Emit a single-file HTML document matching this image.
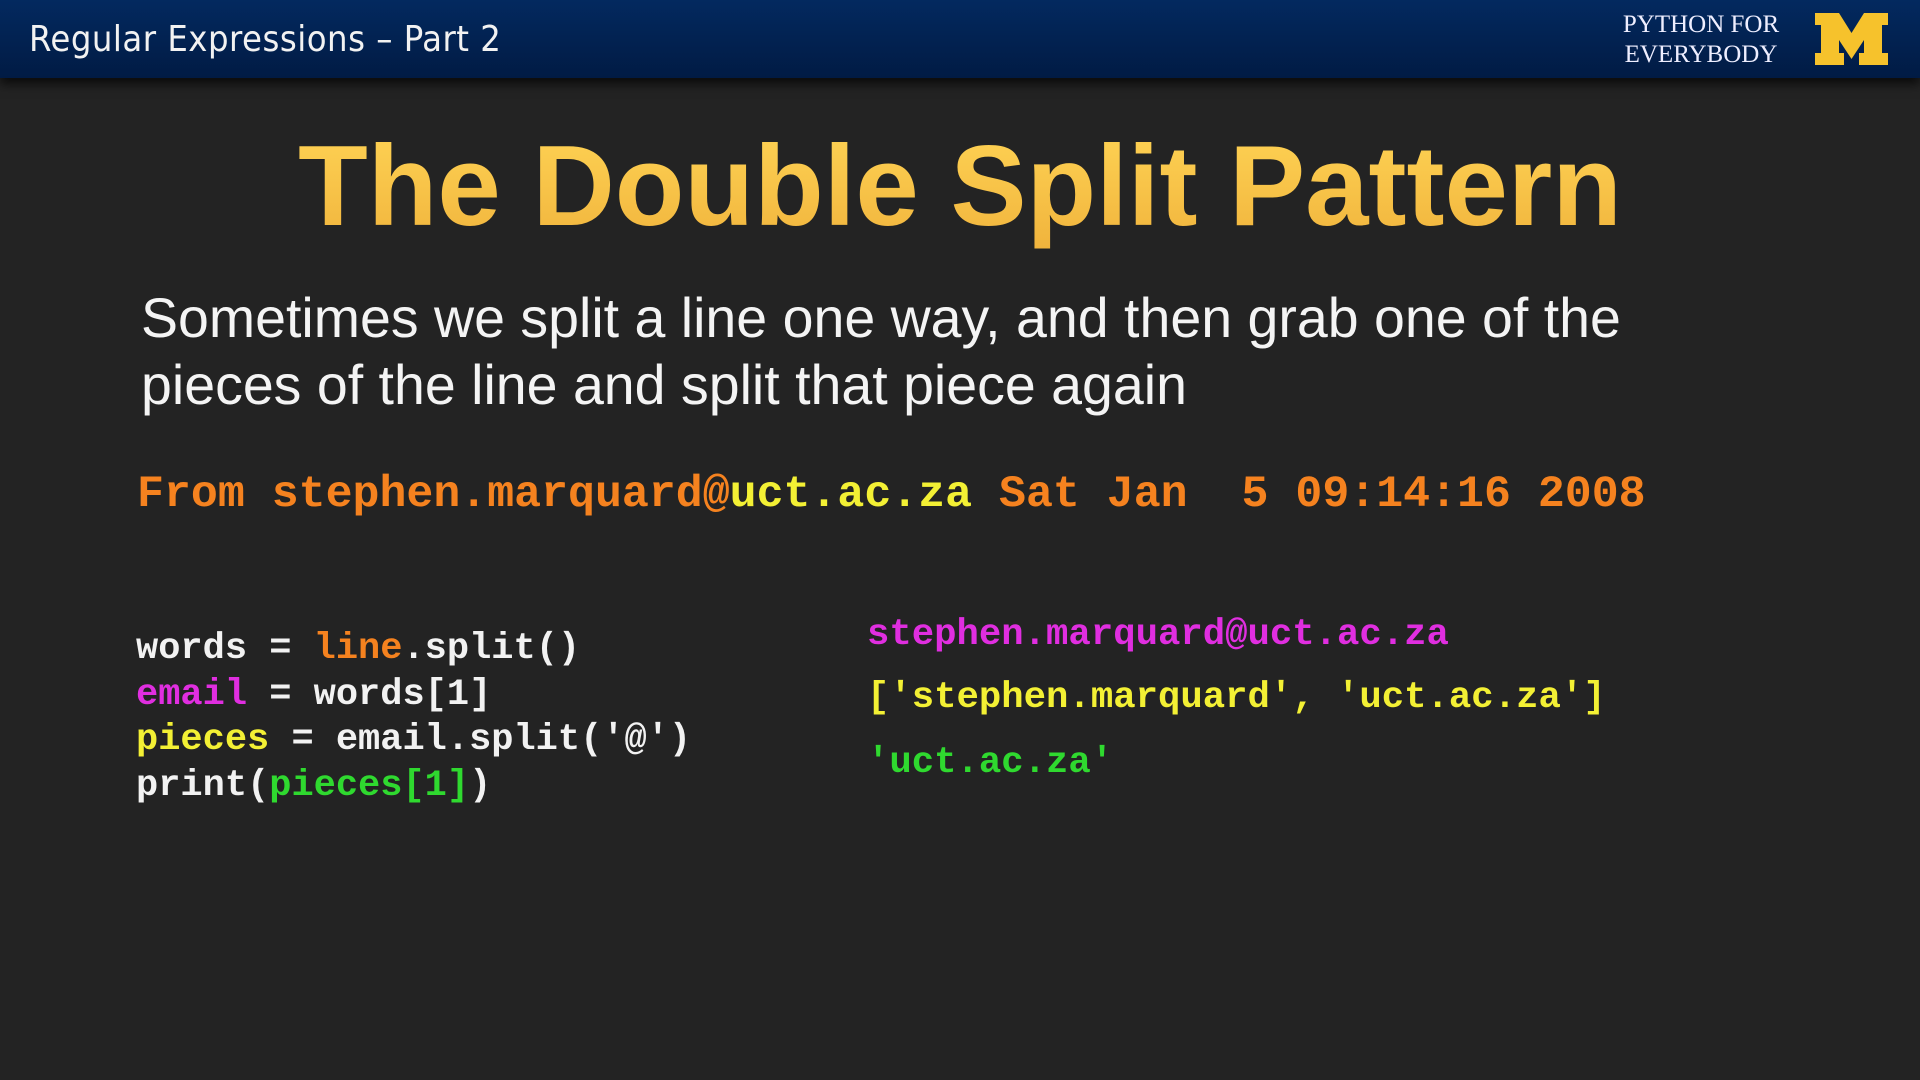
<!DOCTYPE html>
<html><head><meta charset="utf-8"><style>
html,body{margin:0;padding:0}
body{width:1920px;height:1080px;background:#232323;position:relative;overflow:hidden;font-family:"Liberation Sans",sans-serif}
.hdr{position:absolute;left:0;top:0;width:1920px;height:78px;background:linear-gradient(#03295f,#011b44);box-shadow:0 6px 10px rgba(0,0,0,.7)}
.ht{position:absolute;left:29px;top:19px;color:#f2f2f2;font-size:36px;letter-spacing:0.5px;font-family:"DejaVu Sans Condensed","Liberation Sans",sans-serif}
.logo{position:absolute;left:1606px;top:10px;width:190px;text-align:center;color:#eef;font-family:"Liberation Serif",serif;font-size:25px;line-height:30px}
.m{position:absolute;left:1815px;top:13px}
h1{position:absolute;left:0;width:1920px;top:121px;margin:0;text-align:center;font-size:114px;font-weight:bold;background:linear-gradient(#ffd455,#f0b33c);-webkit-background-clip:text;color:transparent}
.p{position:absolute;left:141px;top:285px;color:#f4f4f4;font-size:55.5px;line-height:67px}
.mono{font-family:"Liberation Mono",monospace;font-weight:bold;position:absolute;white-space:pre}
.from{left:137px;top:470px;font-size:44.9px;color:#f5821f}
.y{color:#f3f034}.o{color:#f5821f}.mg{color:#e02ee0}.g{color:#2fd92f}.w{color:#f2f2f2}
.code{left:136px;top:627px;font-size:37px;line-height:45.5px;color:#f2f2f2}
.r{left:867px;font-size:37.3px}
</style></head><body>
<div class="hdr">
<div class="ht">Regular Expressions – Part 2</div>
<div class="logo">PYTHON FOR<br>EVERYBODY</div>
<svg class="m" width="73" height="52" viewBox="0 0 73 52"><polygon fill="#f6c22c" points="0,0 24,0 36.5,20 49,0 73,0 73,12 67,12 67,40 73,40 73,52 44,52 44,40 49,40 49,27 36.5,46 24,27 24,40 29,40 29,52 0,52 0,40 6,40 6,12 0,12"/></svg>
</div>
<h1>The Double Split Pattern</h1>
<div class="p">Sometimes we split a line one way, and then grab one of the<br>pieces of the line and split that piece again</div>
<div class="mono from">From stephen.marquard@<span class="y">uct.ac.za</span> Sat Jan  5 09:14:16 2008</div>
<div class="mono code">words = <span class="o">line</span>.split()
<span class="mg">email</span> = words[1]
<span class="y">pieces</span> = email.split('@')
print(<span class="g">pieces[1]</span>)</div>
<div class="mono r mg" style="top:614px">stephen.marquard@uct.ac.za</div>
<div class="mono r y" style="top:677px">['stephen.marquard', 'uct.ac.za']</div>
<div class="mono r g" style="top:742px">'uct.ac.za'</div>
</body></html>
